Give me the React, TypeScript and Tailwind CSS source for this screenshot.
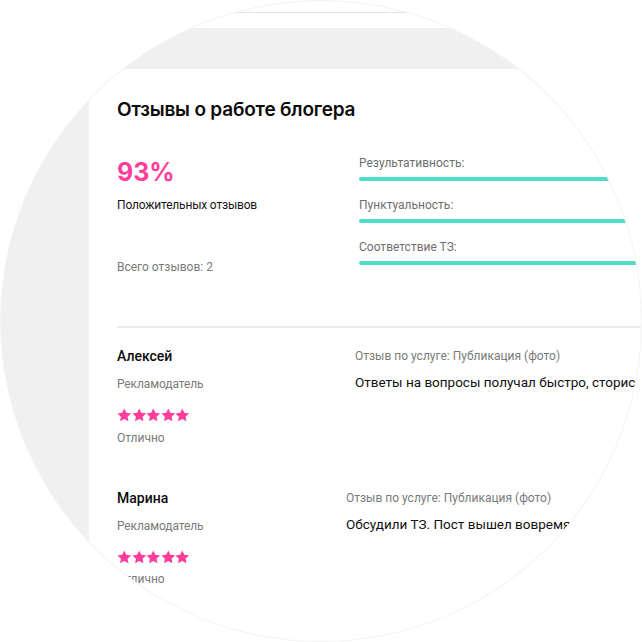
import React from 'react';

const PINK = 'text-[#ff3e9b]';

const Stars: React.FC = () => (
  <div className="flex">
    {[0, 1, 2, 3, 4].map(i => (
      <svg key={i} viewBox="0 0 24 24" className="w-[14.5px] h-[14.5px] fill-[#ff3e9b]">
        <path d="M12 .8l3.4 7.2 7.9.9-5.8 5.4 1.5 7.8L12 18.2l-7 3.9 1.5-7.8L.7 8.9l7.9-.9z" />
      </svg>
    ))}
  </div>
);

interface Review {
  name: string;
  role: string;
  service: string;
  text: string;
  leftWidth: string;
}

const reviews: Review[] = [
  {
    name: 'Алексей',
    role: 'Рекламодатель',
    service: 'Отзыв по услуге: Публикация (фото)',
    text: 'Ответы на вопросы получал быстро, сторис выложил в срок',
    leftWidth: 'w-[238px]',
  },
  {
    name: 'Марина',
    role: 'Рекламодатель',
    service: 'Отзыв по услуге: Публикация (фото)',
    text: 'Обсудили ТЗ. Пост вышел вовремя, всё отлично',
    leftWidth: 'w-[229px]',
  },
];

const metrics = ['Результативность:', 'Пунктуальность:', 'Соответствие ТЗ:'];

export default function App() {
  return (
    <div className="w-[642px] h-[642px] bg-white overflow-hidden font-['Roboto',sans-serif]">
      <div className="ml-[1px] mt-[1px] w-[640px] h-[640px] rounded-full overflow-hidden bg-[#f0f0f0] shadow-[0_0_0_1px_#f4f4f4]">
        {/* top of page behind the card */}
        <div className="h-[27px] bg-white">
          <div className="h-[11px]">
            <div className="ml-[282px] w-[4px] h-[2px] bg-[#ff3e9b]" />
          </div>
          <div className="h-px bg-[#e4e4e4]" />
        </div>

        <div className="mt-[41px] ml-[88px] w-[580px] h-[600px] bg-white pt-[29px] pl-[28px]">
          <h2 className="font-['Inter',sans-serif] text-[19px] leading-[24px] font-semibold tracking-[-0.01em] text-[#0b0b0b]">
            Отзывы о работе блогера
          </h2>

          <div className="flex mt-[33px]">
            <div className="w-[242px]">
              <div className={`font-['Inter',sans-serif] text-[25px] leading-[34px] font-bold ${PINK}`}>93%</div>
              <div className="mt-[8px] text-[12px] leading-[16px] tracking-[-0.015em] text-[#151515]">Положительных отзывов</div>
              <div className="mt-[46px] text-[12px] leading-[16px] text-[#7a7a7a]">Всего отзывов: 2</div>
            </div>
            <div className="flex-1 flex flex-col gap-[16px]">
              {metrics.map(m => (
                <div key={m}>
                  <div className="text-[12px] leading-[16px] text-[#6e6e6e]">{m}</div>
                  <div className="mt-[6px] h-[4px] rounded-full bg-[#4edccb]" />
                </div>
              ))}
            </div>
          </div>

          <div className="mt-[51px] h-[2px] bg-[#ececec]" />

          <div className="flex flex-col gap-[42px] mt-[18px]">
            {reviews.map(r => (
              <div key={r.name} className="flex">
                <div className={`${r.leftWidth} shrink-0`}>
                  <div className="text-[14px] leading-[20px] font-medium text-[#0b0b0b]">{r.name}</div>
                  <div className="mt-[10px] text-[12px] leading-[16px] tracking-[-0.01em] text-[#7a7a7a]">{r.role}</div>
                  <div className="mt-[16px]">
                    <Stars />
                  </div>
                  <div className="mt-[7px] text-[12px] leading-[16px] text-[#7a7a7a]">Отлично</div>
                </div>
                <div className="flex-1 whitespace-nowrap">
                  <div className="mt-[2px] text-[12px] leading-[16px] text-[#7a7a7a]">{r.service}</div>
                  <div className="mt-[9px] text-[13.5px] leading-[18px] text-[#111]">{r.text}</div>
                </div>
              </div>
            ))}
          </div>
        </div>
      </div>
    </div>
  );
}
